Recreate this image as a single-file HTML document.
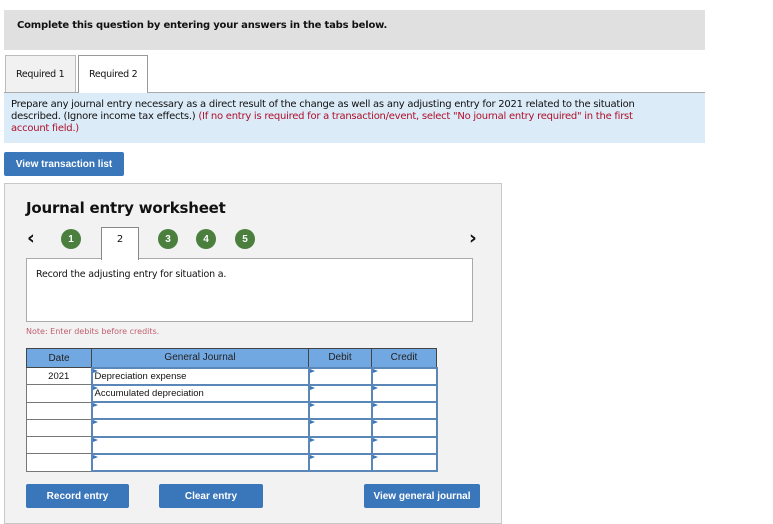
<!DOCTYPE html>
<html><head><style>
*{margin:0;padding:0;box-sizing:border-box}
body{width:773px;height:524px;background:#fff;font-family:"DejaVu Sans","Liberation Sans",sans-serif;position:relative;overflow:hidden;color:#111}
.a{position:absolute}
.btn{position:absolute;background:#3a76ba;color:#fff;font:bold 10px "Liberation Sans",sans-serif;display:flex;align-items:center;justify-content:center;border-radius:2px}
.c{position:absolute;width:20px;height:20px;border-radius:50%;background:#4a7f3e;color:#fff;font:bold 10px "Liberation Sans",sans-serif;display:flex;align-items:center;justify-content:center}
table{position:absolute;left:26px;top:348px;border-collapse:collapse;font:9.5px "Liberation Sans",sans-serif}
td{border:1px solid #777;height:17.3px;padding:0}
th{background:#72a8e2;border:1px solid #444;height:19px;font-weight:normal;font-size:10px;color:#222}
td.i{border:2px solid #5b86b8;position:relative;padding-left:2px}
td.i:before{content:"";position:absolute;left:0;top:0;border-left:5px solid #3a76ba;border-top:2px solid transparent;border-bottom:2px solid transparent}
</style></head><body>
<div class="a" style="left:4px;top:10px;width:701px;height:40px;background:#e0e0e0"></div>
<div class="a" style="left:17px;top:20px;font-weight:bold;font-size:10px;letter-spacing:-0.2px">Complete this question by entering your answers in the tabs below.</div>
<div class="a" style="left:5px;top:55px;width:71px;height:37px;background:#f1f1f1;border:1px solid #bbb;border-bottom:none;font-size:9.5px;padding:13px 0 0 10px;letter-spacing:-0.3px">Required 1</div>
<div class="a" style="left:4px;top:92px;width:701px;height:51px;background:#dbebf8;border-top:1px solid #aaa"></div>
<div class="a" style="left:78px;top:55px;width:70px;height:38px;background:#fff;border:1px solid #999;border-bottom:none;font-size:9.5px;padding:13px 0 0 10px;letter-spacing:-0.3px">Required 2</div>
<div class="a" style="left:11px;top:99px;width:655px;font-size:10px;line-height:12px;letter-spacing:-0.25px">Prepare any journal entry necessary as a direct result of the change as well as any adjusting entry for 2021 related to the situation described. (Ignore income tax effects.) <span style="color:#b0102a">(If no entry is required for a transaction/event, select "No journal entry required" in the first account field.)</span></div>
<div class="btn" style="left:4px;top:152px;width:120px;height:24px">View transaction list</div>
<div class="a" style="left:4px;top:183px;width:498px;height:341px;background:#f2f2f2;border:1px solid #c8c8c8"></div>
<div class="a" style="left:26px;top:199px;font-weight:bold;font-size:15px;letter-spacing:-0.2px">Journal entry worksheet</div>
<div class="a" style="left:27px;top:227px;font-size:19px;font-weight:bold">&#8249;</div>
<div class="a" style="left:469px;top:227px;font-size:19px;font-weight:bold">&#8250;</div>
<div class="c" style="left:61px;top:229px">1</div>
<div class="a" style="left:26px;top:258px;width:447px;height:64px;background:#fff;border:1px solid #aaa"></div>
<div class="a" style="left:101px;top:227px;width:38px;height:33px;background:#fff;border:1px solid #888;border-bottom:none;font-size:10px;text-align:center;padding-top:6px">2</div>
<div class="c" style="left:158px;top:229px">3</div>
<div class="c" style="left:196px;top:229px">4</div>
<div class="c" style="left:235px;top:229px">5</div>
<div class="a" style="left:36px;top:268px;font-size:9.5px;letter-spacing:-0.2px;padding-top:1px">Record the adjusting entry for situation a.</div>
<div class="a" style="left:26px;top:327px;font-size:8px;color:#c06070">Note: Enter debits before credits.</div>
<table>
<tr><th style="width:65px">Date</th><th style="width:217px">General Journal</th><th style="width:63px">Debit</th><th style="width:65px">Credit</th></tr>
<tr><td style="text-align:center;background:#fff">2021</td><td class="i" style="background:#fff">Depreciation expense</td><td class="i" style="background:#fff"></td><td class="i" style="background:#fff"></td></tr>
<tr><td style="background:#fff"></td><td class="i" style="background:#fff">Accumulated depreciation</td><td class="i" style="background:#fff"></td><td class="i" style="background:#fff"></td></tr>
<tr><td style="background:#fff"></td><td class="i" style="background:#fff"></td><td class="i" style="background:#fff"></td><td class="i" style="background:#fff"></td></tr>
<tr><td style="background:#fff"></td><td class="i" style="background:#fff"></td><td class="i" style="background:#fff"></td><td class="i" style="background:#fff"></td></tr>
<tr><td style="background:#fff"></td><td class="i" style="background:#fff"></td><td class="i" style="background:#fff"></td><td class="i" style="background:#fff"></td></tr>
<tr><td style="background:#fff"></td><td class="i" style="background:#fff"></td><td class="i" style="background:#fff"></td><td class="i" style="background:#fff"></td></tr>
</table>
<div class="btn" style="left:26px;top:484px;width:103px;height:24px">Record entry</div>
<div class="btn" style="left:159px;top:484px;width:104px;height:24px">Clear entry</div>
<div class="btn" style="left:364px;top:484px;width:116px;height:24px">View general journal</div>
</body></html>
